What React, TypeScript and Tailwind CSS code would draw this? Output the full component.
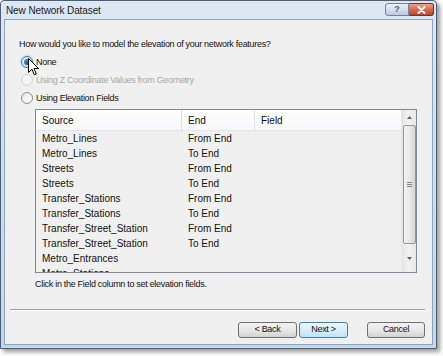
import type { ReactNode } from "react";

const ui = { fontFamily: '"Liberation Sans", Arial, sans-serif' };

const rows: [string, string][] = [
  ["Metro_Lines", "From End"],
  ["Metro_Lines", "To End"],
  ["Streets", "From End"],
  ["Streets", "To End"],
  ["Transfer_Stations", "From End"],
  ["Transfer_Stations", "To End"],
  ["Transfer_Street_Station", "From End"],
  ["Transfer_Street_Station", "To End"],
  ["Metro_Entrances", ""],
  ["Metro_Stations", ""],
];

function Radio({ checked, disabled, children }: { checked?: boolean; disabled?: boolean; children: ReactNode }) {
  return (
    <div className="flex h-[18px] items-center">
      <span
        className={
          disabled
            ? "flex h-[12px] w-[12px] items-center justify-center rounded-full border border-[#d4d4d4] bg-[#f4f4f4]"
            : checked
              ? "flex h-[12px] w-[12px] items-center justify-center rounded-full border border-[#3c7fb1] bg-gradient-to-br from-[#e9f5fd] to-[#b7daf2] shadow-[0_0_2px_#6cb4e8]"
              : "flex h-[12px] w-[12px] items-center justify-center rounded-full border border-[#8e8f8f] bg-gradient-to-br from-[#e6e6e6] to-[#ffffff]"
        }
      >
        {checked && <span className="h-[6px] w-[6px] rounded-full bg-gradient-to-br from-[#5aa3d8] to-[#0f3f6e]" />}
      </span>
      <span className={"ml-[3px] text-[9px] leading-[11px] tracking-[-0.3px] " + (disabled ? "text-[#a9a9a9]" : "text-[#111]")}>
        {children}
      </span>
    </div>
  );
}

function Btn({ children, primary, w }: { children: ReactNode; primary?: boolean; w: string }) {
  return (
    <div
      className={
        "flex h-[16px] items-center justify-center rounded-[3px] border text-[9px] tracking-[-0.3px] text-[#111] " +
        w +
        (primary
          ? " border-[#3c7fb1] bg-gradient-to-b from-[#eaf6fd] via-[#d9eefa] to-[#bee6fd]"
          : " border-[#707070] bg-gradient-to-b from-[#f2f2f2] via-[#e8e8e8] to-[#d3d3d3]")
      }
    >
      {children}
    </div>
  );
}

export default function App() {
  return (
    <div className="relative h-[356px] w-[443px] overflow-hidden bg-white" style={ui}>
      <div className="flex h-[349px] w-[437px] flex-col rounded-t-[4px] border border-[#4e5f74] bg-gradient-to-b from-[#dce8f4] via-[#cfdeef] to-[#c5d7ec] px-[3px] pb-[3px] shadow-[3px_3px_4px_rgba(0,0,0,0.4)]">
        {/* title bar */}
        <div className="flex h-[18px] items-center justify-between">
          <span className="pl-[2px] text-[10px] tracking-[-0.1px] text-[#1b1b1b]">New Network Dataset</span>
          <div className="mr-[-1px] mt-[2px] flex self-start">
            <div className="flex h-[13px] w-[24px] items-center justify-center rounded-l-[3px] border border-[#6f829a] bg-gradient-to-b from-[#e9f0f8] via-[#d2dfee] to-[#b9cbe0] text-[9px] font-bold leading-none text-[#4a5b70]">
              ?
            </div>
            <div className="flex h-[13px] w-[25px] items-center justify-center rounded-r-[3px] border border-l-0 border-[#6d3229] bg-gradient-to-b from-[#e8a493] via-[#d46a52] to-[#c2412a]">
              <svg width="9" height="8" viewBox="0 0 9 8">
                <path d="M1.5 1 L7.5 7 M7.5 1 L1.5 7" stroke="#fff" strokeWidth="2" strokeLinecap="round" />
              </svg>
            </div>
          </div>
        </div>

        {/* content */}
        <div className="flex flex-1 flex-col border border-[#8fa3bb] bg-[#f0f0f0]">
          <div className="mt-[19px] pl-[14px] text-[9px] leading-[11px] tracking-[-0.3px] text-[#111]">
            How would you like to model the elevation of your network features?
          </div>

          <div className="mt-[3px] flex flex-col pl-[16px]">
            <Radio checked>None</Radio>
            <Radio disabled>Using Z Coordinate Values from Geometry</Radio>
            <Radio>Using Elevation Fields</Radio>
          </div>

          {/* table */}
          <div className="ml-[30px] mt-[2px] flex h-[164px] w-[382px] border border-[#828790] bg-[#f0f0f0]">
            <div className="flex flex-1 flex-col overflow-hidden">
              <div className="flex h-[21px] shrink-0 items-center border-b border-[#e5e5e5] bg-gradient-to-b from-[#ffffff] to-[#f6f7f8] text-[10px] text-[#111]">
                <div className="flex h-full w-[146px] items-center border-r border-[#e0e0e0] pl-[6px]">Source</div>
                <div className="flex h-full w-[73px] items-center border-r border-[#e0e0e0] pl-[6px]">End</div>
                <div className="flex h-full items-center pl-[6px]">Field</div>
              </div>
              {rows.map(([src, end], i) => (
                <div key={i} className="flex h-[15px] shrink-0 items-center text-[10px] text-[#111]">
                  <div className="w-[146px] pl-[6px]">{src}</div>
                  <div className="w-[73px] pl-[6px]">{end}</div>
                </div>
              ))}
            </div>
            {/* scrollbar */}
            <div className="flex w-[15px] flex-col items-center border-l border-[#e6e6e6] bg-gradient-to-r from-[#e6e6e6] via-[#f2f2f2] to-[#e8e8e8]">
              <div className="flex h-[15px] items-center justify-center">
                <svg width="5" height="3" viewBox="0 0 5 3">
                  <path d="M0 3 L2.5 0 L5 3 Z" fill="#5f5f5f" />
                </svg>
              </div>
              <div className="flex h-[119px] w-[13px] items-center justify-center rounded-[2px] border border-[#979797] bg-gradient-to-r from-[#f4f4f4] via-[#e8e8e8] to-[#d4d4d4]">
                <svg width="5" height="5" viewBox="0 0 5 5">
                  <path d="M0 0.5 H5 M0 2.5 H5 M0 4.5 H5" stroke="#8a8a8a" strokeWidth="1" />
                </svg>
              </div>
              <div className="flex flex-1 items-center justify-center">
                <svg width="5" height="3" viewBox="0 0 5 3">
                  <path d="M0 0 L2.5 3 L5 0 Z" fill="#5f5f5f" />
                </svg>
              </div>
            </div>
          </div>

          <div className="ml-[30px] mt-[6px] text-[9px] leading-[11px] tracking-[-0.3px] text-[#111]">
            Click in the Field column to set elevation fields.
          </div>

          <div className="ml-[5px] mt-[19px] w-[415px] border-b border-t border-b-white border-t-[#a0a0a0]" />

          <div className="mt-[11px] flex justify-end pr-[7px]">
            <Btn w="w-[59px]">&lt; Back</Btn>
            <div className="ml-[2px]">
              <Btn w="w-[49px]" primary>
                Next &gt;
              </Btn>
            </div>
            <div className="ml-[19px]">
              <Btn w="w-[58px]">Cancel</Btn>
            </div>
          </div>
        </div>
      </div>

      {/* mouse cursor */}
      <svg className="absolute left-[28px] top-[58px]" width="11" height="18" viewBox="0 0 11 18">
        <path d="M0.5 0.5 L0.5 14.5 L4 11.2 L6.3 16.8 L8.3 16 L6 10.5 L10.5 10.5 Z" fill="#fff" stroke="#000" strokeWidth="1" strokeLinejoin="round" />
      </svg>
    </div>
  );
}
